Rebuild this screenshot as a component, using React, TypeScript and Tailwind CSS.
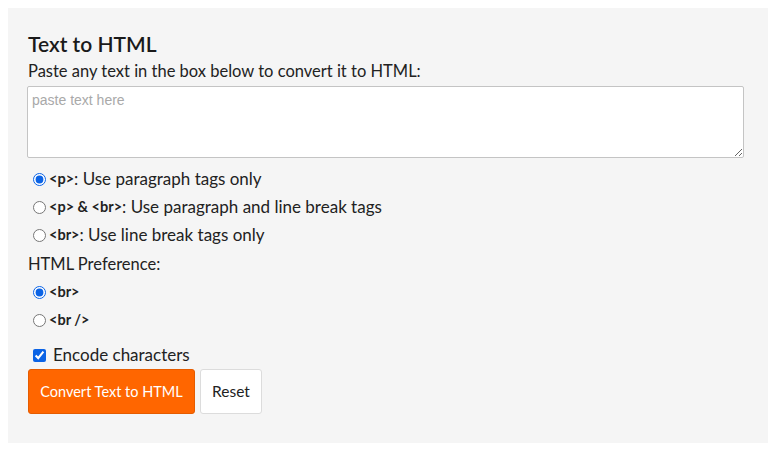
import { useState } from 'react'

const formatOptions = [
  { id: 'p', tag: '<p>', text: ': Use paragraph tags only' },
  { id: 'pbr', tag: '<p> & <br>', text: ': Use paragraph and line break tags' },
  { id: 'br', tag: '<br>', text: ': Use line break tags only' }
]

const brOptions = [
  { id: 'br', tag: '<br>' },
  { id: 'brslash', tag: '<br />' }
]

export default function App() {
  const [text, setText] = useState('')
  const [format, setFormat] = useState('p')
  const [brStyle, setBrStyle] = useState('br')
  const [encode, setEncode] = useState(true)

  const reset = () => {
    setText('')
    setFormat('p')
    setBrStyle('br')
    setEncode(true)
  }

  return (
    <div className="min-h-screen bg-white pt-2 px-2 font-['Lato','Open_Sans',sans-serif] text-[#222]">
      <div className="bg-[#f5f5f5] pl-[19px] pr-[24px] pt-[22px] pb-[29px]">
        <h2 className="text-[21px] leading-[28px] font-semibold text-[#1a1a1a] pl-px">Text to HTML</h2>
        <p className="text-[16.5px] leading-[24px] pl-px mt-[1px]">Paste any text in the box below to convert it to HTML:</p>
        <textarea
          value={text}
          onChange={e => setText(e.target.value)}
          placeholder="paste text here"
          className="block mt-[3px] w-full h-[72px] bg-white border border-[#c4c4c4] rounded-[2px] px-[4px] py-[4px] text-[14px] leading-[18px] font-['Liberation_Sans',Arial,sans-serif] placeholder:text-[#a9a9a9] outline-none"
        />

        <div className="mt-[7px] flex flex-col">
          {formatOptions.map(opt => (
            <label key={opt.id} className="flex items-center h-[28px] text-[17px] cursor-pointer">
              <input
                type="radio"
                name="format"
                checked={format === opt.id}
                onChange={() => setFormat(opt.id)}
                className="ml-[6px] mr-[3px] w-[13px] h-[13px] accent-[#0b63e5]"
              />
              <span className="font-bold text-[14.5px]">{opt.tag}</span>
              <span>{opt.text}</span>
            </label>
          ))}
        </div>

        <div className="h-[28px] flex items-center text-[16.5px] pl-px mt-px">HTML Preference:</div>

        <div className="flex flex-col">
          {brOptions.map(opt => (
            <label key={opt.id} className="flex items-center h-[28px] text-[17px] cursor-pointer">
              <input
                type="radio"
                name="brstyle"
                checked={brStyle === opt.id}
                onChange={() => setBrStyle(opt.id)}
                className="ml-[6px] mr-[3px] w-[13px] h-[13px] accent-[#0b63e5]"
              />
              <span className="font-bold text-[14.5px]">{opt.tag}</span>
            </label>
          ))}
        </div>

        <label className="mt-[9px] flex items-center h-[24px] text-[17px] cursor-pointer">
          <input
            type="checkbox"
            checked={encode}
            onChange={e => setEncode(e.target.checked)}
            className="ml-[6px] mr-[7px] w-[13px] h-[13px] accent-[#0b63e5]"
          />
          Encode characters
        </label>

        <div className="mt-[2px] flex gap-[5px] pl-px">
          <button className="h-[45px] w-[167px] bg-[#ff6600] text-white text-[14.5px] rounded-[3px] border border-[#e55c00]">
            Convert Text to HTML
          </button>
          <button
            onClick={reset}
            className="h-[45px] w-[62px] bg-white text-[#222] text-[15.5px] rounded-[3px] border border-[#dcdcdc]"
          >
            Reset
          </button>
        </div>
      </div>
    </div>
  )
}
